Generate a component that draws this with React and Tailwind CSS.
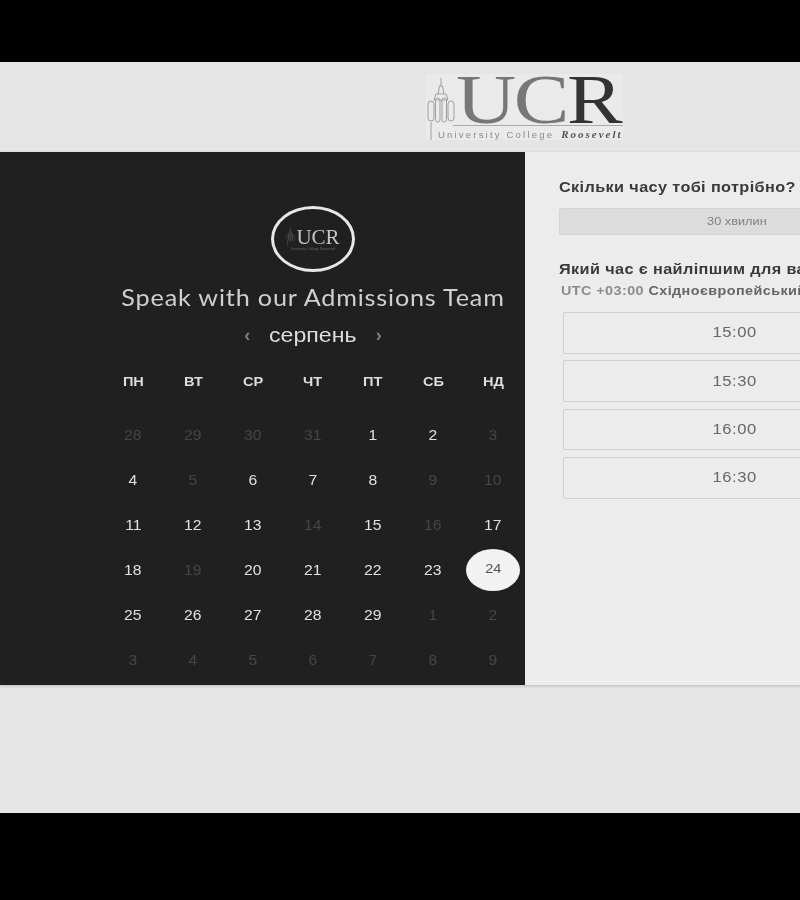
const days = ['ПН', 'ВТ', 'СР', 'ЧТ', 'ПТ', 'СБ', 'НД']

// [label, state]: 0 disabled, 1 enabled, 2 selected
const weeks = [
  [[28, 0], [29, 0], [30, 0], [31, 0], [1, 1], [2, 1], [3, 0]],
  [[4, 1], [5, 0], [6, 1], [7, 1], [8, 1], [9, 0], [10, 0]],
  [[11, 1], [12, 1], [13, 1], [14, 0], [15, 1], [16, 0], [17, 1]],
  [[18, 1], [19, 0], [20, 1], [21, 1], [22, 1], [23, 1], [24, 2]],
  [[25, 1], [26, 1], [27, 1], [28, 1], [29, 1], [1, 0], [2, 0]],
  [[3, 0], [4, 0], [5, 0], [6, 0], [7, 0], [8, 0], [9, 0]],
]

const slots = ['15:00', '15:30', '16:00', '16:30']

function Tower({ className, stroke }) {
  return (
    <svg className={className} viewBox="0 0 28 62" fill="none" stroke={stroke} strokeWidth="1">
      <path d="M14 0v8M11 16l1.5-8h3l1.5 8" />
      <path d="M9 16h10l2 6H7z" />
      <rect x="1" y="23" width="6" height="20" rx="3" />
      <rect x="8.5" y="20" width="4.5" height="24" rx="2.2" />
      <rect x="15" y="20" width="4.5" height="24" rx="2.2" />
      <rect x="21" y="23" width="6" height="20" rx="3" />
      <path d="M4 44v18" />
    </svg>
  )
}

function HeaderLogo() {
  return (
    <div className="relative h-[66px] w-[197px] bg-[#eaeaea]">
      <Tower className="absolute left-[1px] top-[4px] h-[62px] w-[28px]" stroke="#a0a0a0" />
      <div className="absolute left-[30px] top-[-9px] flex origin-left scale-x-[1.19] font-['Liberation_Serif',serif] text-[70px] leading-[70px] tracking-[-2px]">
        <span className="text-[#777777]">U</span>
        <span className="text-[#777777]">C</span>
        <span className="text-[#333333]">R</span>
      </div>
      <div className="absolute left-[27px] right-0 top-[51px] h-px bg-[#aaaaaa]" />
      <div className="absolute left-[12px] top-[52px] flex items-baseline gap-[7px] whitespace-nowrap text-[#8a8a8a]">
        <span className="font-['Liberation_Sans',sans-serif] text-[9.5px] tracking-[2.2px]">University College</span>
        <span className="font-['Liberation_Serif',serif] text-[11px] font-bold italic tracking-[2px] text-[#555555]">Roosevelt</span>
      </div>
    </div>
  )
}

function DayCell({ label, state }) {
  if (state === 2) {
    return (
      <div className="flex h-[45px] items-center justify-center">
        <div className="mb-[2px] flex h-[42px] w-[54px] items-center justify-center rounded-[50%] bg-[#f2f2f2] pb-[2px] text-[13px] text-[#555555]">
          <span className="inline-block scale-x-[1.12]">{label}</span>
        </div>
      </div>
    )
  }
  return (
    <div className={`flex h-[45px] items-center justify-center text-[14px] ${state ? 'text-[#e0e0e0]' : 'text-[#464646]'}`}>
      <span className="inline-block scale-x-[1.12]">{label}</span>
    </div>
  )
}

export default function App() {
  return (
    <div className="flex h-[900px] w-[800px] flex-col overflow-hidden bg-black font-['Liberation_Sans',sans-serif] blur-[0.4px]">
      <div className="mt-[62px] flex h-[751px] w-[800px] flex-col bg-[#e5e5e5]">
        <header className="flex h-[90px] items-start pl-[426px] pt-[12px]">
          <HeaderLogo />
        </header>

        <main className="flex h-[533px] w-[1040px] shrink-0 shadow-[0_1px_3px_rgba(0,0,0,0.2)]">
          <section className="w-[525px] shrink-0 bg-[#202020] pl-[103px] pr-[2px] pt-[54px]">
            <div className="flex flex-col items-center">
              <div className="flex h-[66px] w-[84px] flex-col items-center justify-center rounded-[50%] border-[3px] border-[#e8e8e8]">
                <div className="flex items-center gap-[1px]">
                  <Tower className="h-[18px] w-[9px]" stroke="#808080" />
                  <span className="font-['Liberation_Serif',serif] text-[21px] leading-[16px] text-[#c4c4c4]">UCR</span>
                </div>
                <span className="mt-[1px] whitespace-nowrap text-[3.5px] leading-[4px] text-[#666666]">University College Roosevelt</span>
              </div>
              <h1 className="mt-[9px] scale-x-[1.095] whitespace-nowrap font-['Lato',sans-serif] text-[23px] leading-[32px] tracking-[0.75px] text-[#cfcfcf]">
                Speak with our Admissions Team
              </h1>
              <div className="mt-[7px] flex h-[30px] items-center">
                <span className="text-[18px] font-bold text-[#808080]">‹</span>
                <span className="mx-[23px] inline-block scale-x-[1.1] text-[21px] text-[#dddddd]">серпень</span>
                <span className="text-[18px] font-bold text-[#808080]">›</span>
              </div>
            </div>

            <div className="mt-[22px] grid grid-cols-7">
              {days.map((d) => (
                <div key={d} className="flex h-[20px] items-center justify-center text-[13px] font-bold text-[#dddddd]">
                  <span className="inline-block scale-x-[1.12]">{d}</span>
                </div>
              ))}
            </div>

            <div className="mt-[21px] grid grid-cols-7">
              {weeks.flat().map(([label, state], i) => (
                <DayCell key={i} label={label} state={state} />
              ))}
            </div>
          </section>

          <section className="flex-1 bg-[#ececec] pl-[34px] pt-[25px]">
            <h2 className="origin-left scale-x-[1.083] whitespace-nowrap text-[15px] font-bold leading-[20px] tracking-[0.35px] text-[#3a3a3a]">
              Скільки часу тобі потрібно?
            </h2>
            <div className="mt-[11px] flex h-[27px] w-[356px] items-center justify-center rounded-[2px] border border-[#d4d4d4] bg-[#dcdcdc] text-[11.5px] text-[#808080]">
              <span className="inline-block scale-x-[1.11]">30 хвилин</span>
            </div>

            <h2 className="mt-[24px] origin-left scale-x-[1.083] whitespace-nowrap text-[15px] font-bold leading-[20px] tracking-[0.35px] text-[#3a3a3a]">
              Який час є найліпшим для вас?
            </h2>
            <p className="ml-[2px] mt-[3px] origin-left scale-x-[1.065] whitespace-nowrap text-[13.5px] font-bold leading-[18px] tracking-[0.4px] text-[#666666]">
              <span className="text-[#8c8c8c]">UTC +03:00</span> Східноєвропейський час
            </p>

            <div className="ml-[4px] mt-[12px] flex w-[344px] flex-col gap-[6.9px]">
              {slots.map((s) => (
                <div key={s} className="flex h-[41.5px] items-center justify-center rounded-[2px] border border-[#cfcfcf] bg-[#ececec] pb-[2px] text-[15.5px] tracking-[0.5px] text-[#666666]">
                  <span className="inline-block scale-x-[1.07]">{s}</span>
                </div>
              ))}
            </div>
          </section>
        </main>
      </div>
    </div>
  )
}
